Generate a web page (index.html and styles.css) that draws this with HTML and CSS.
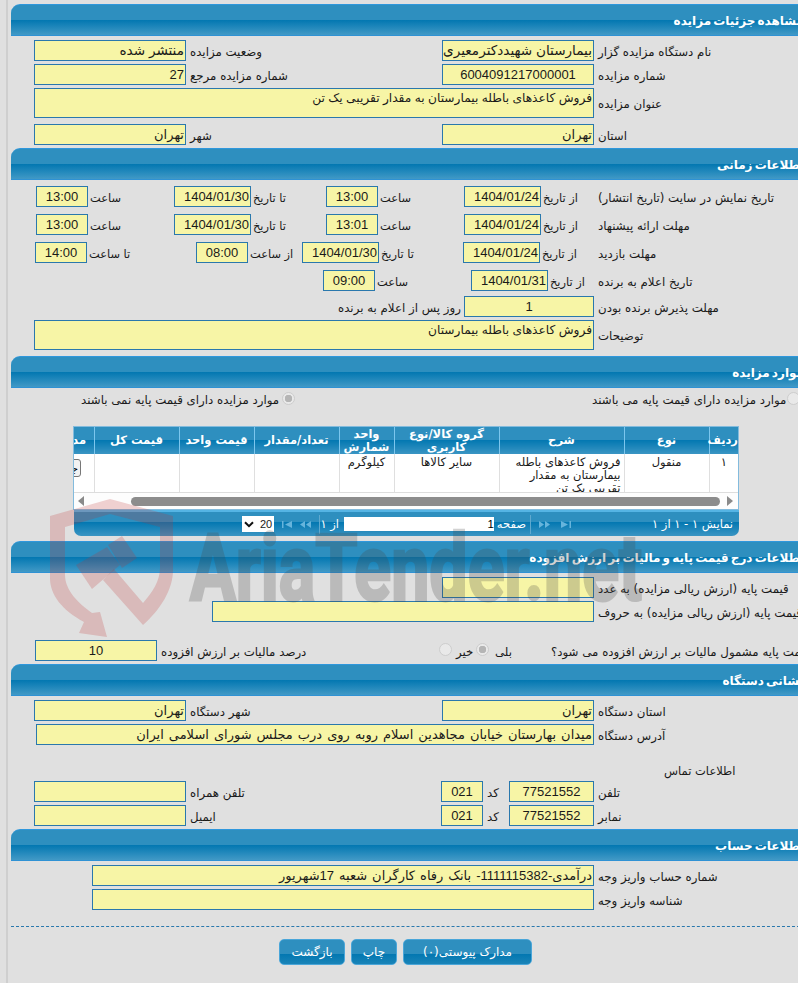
FILE: index.html
```html
<!DOCTYPE html>
<html lang="fa">
<head>
<meta charset="utf-8">
<title>مشاهده جزئیات مزایده</title>
<link rel="stylesheet" href="styles.css">
</head>
<body>
<div class="page">

<section class="panel">
  <h2 class="head">مشاهده جزئیات مزایده</h2>
  <div class="row r-pair">
    <label>نام دستگاه مزایده گزار</label><div class="val wide">بیمارستان شهیددکترمعیری</div>
    <label>وضعیت مزایده</label><div class="val wide">منتشر شده</div>
  </div>
  <div class="row r-pair">
    <label>شماره مزایده</label><div class="val center">6004091217000001</div>
    <label>شماره مزایده مرجع</label><div class="val">27</div>
  </div>
  <div class="row tall r-wide">
    <label class="mid">عنوان مزایده</label><div class="val narrow">فروش کاعذهای باطله بیمارستان به مقدار تقریبی یک تن</div>
  </div>
  <div class="row r-pair mt6">
    <label>استان</label><div class="val">تهران</div>
    <label>شهر</label><div class="val">تهران</div>
  </div>
</section>

<section class="panel">
  <h2 class="head">اطلاعات زمانی</h2>
  <div class="row r-t1 mt6">
    <label>تاریخ نمایش در سایت (تاریخ انتشار)</label>
    <label>از تاریخ</label><div class="val">1404/01/24</div>
    <label>ساعت</label><div class="val center">13:00</div>
    <label>تا تاریخ</label><div class="val">1404/01/30</div>
    <label>ساعت</label><div class="val center">13:00</div>
  </div>
  <div class="row r-t1 mt8">
    <label>مهلت ارائه پیشنهاد</label>
    <label>از تاریخ</label><div class="val">1404/01/24</div>
    <label>ساعت</label><div class="val center">13:01</div>
    <label>تا تاریخ</label><div class="val">1404/01/30</div>
    <label>ساعت</label><div class="val center">13:00</div>
  </div>
  <div class="row r-t3 mt8">
    <label>مهلت بازدید</label>
    <label>از تاریخ</label><div class="val">1404/01/24</div>
    <label>تا تاریخ</label><div class="val">1404/01/30</div>
    <label>از ساعت</label><div class="val center">08:00</div>
    <label>تا ساعت</label><div class="val center">14:00</div>
  </div>
  <div class="row r-t4 mt8">
    <label>تاریخ اعلام به برنده</label>
    <label>از تاریخ</label><div class="val">1404/01/31</div>
    <label>ساعت</label><div class="val center">09:00</div>
  </div>
  <div class="row r-t5 mt6">
    <label>مهلت پذیرش برنده بودن</label><div class="val center">1</div>
    <label>روز پس از اعلام به برنده</label>
  </div>
  <div class="row tall r-wide">
    <label class="mid">توضیحات</label><div class="val narrow">فروش کاعذهای باطله بیمارستان</div>
  </div>
</section>

<section class="panel sec3">
  <h2 class="head">موارد مزایده</h2>
  <div class="radios">
    <span class="radio-item first"><input type="radio" name="base" disabled><span>موارد مزایده دارای قیمت پایه می باشند</span></span>
    <span class="radio-item second"><input type="radio" name="base" checked disabled><span>موارد مزایده دارای قیمت پایه نمی باشند</span></span>
  </div>
  <div class="grid-box">
    <div class="grid-clip">
      <table>
        <colgroup>
          <col class="c29"><col class="c85"><col class="c125"><col class="c105"><col class="c55"><col class="c85"><col class="c75"><col class="c85"><col class="c52">
        </colgroup>
        <thead>
          <tr><th>ردیف</th><th>نوع</th><th>شرح</th><th>گروه کالا/نوع کاربری</th><th>واحد شمارش</th><th>تعداد/مقدار</th><th>قیمت واحد</th><th>قیمت کل</th><th>مدارک</th></tr>
        </thead>
        <tbody>
          <tr><td>۱</td><td>منقول</td><td class="desc">فروش کاعذهای باطله بیمارستان به مقدار تقریبی یک تن</td><td>سایر کالاها</td><td>کیلوگرم</td><td></td><td></td><td></td><td><button class="mini" type="button">جزئیات</button></td></tr>
        </tbody>
      </table>
    </div>
    <div class="hscroll">
      <svg class="arr" width="6" height="10" viewBox="0 0 6 10"><path d="M6 0V10L0 5Z"/></svg>
      <div class="thumb"></div>
      <svg class="arr" width="6" height="10" viewBox="0 0 6 10"><path d="M0 0V10L6 5Z"/></svg>
    </div>
  </div>
  <div class="pager">
    <div class="sel"><svg width="10" height="7" viewBox="0 0 10 7"><path d="M1 1.2L5 5.2L9 1.2" fill="none" stroke="#111" stroke-width="2"/></svg><span>20</span></div>
    <svg class="pg g1" width="10" height="7" viewBox="0 0 10 7"><path d="M0 0H1.5V7H0ZM3 3.5L10 0V7Z"/></svg>
    <svg class="pg g2" width="11" height="7" viewBox="0 0 11 7"><path d="M0 3.5L5 0V7ZM6 3.5L11 0V7Z"/></svg>
    <span class="sep"></span>
    <span class="pt of">از ۱</span>
    <input class="pinput" type="text" value="1">
    <span class="pt pg-word">صفحه</span>
    <span class="sep"></span>
    <svg class="pg g3" width="11" height="7" viewBox="0 0 11 7"><path d="M0 0L5 3.5L0 7ZM6 0L11 3.5L6 7Z"/></svg>
    <svg class="pg g4" width="10" height="7" viewBox="0 0 10 7"><path d="M0 0L7 3.5L0 7ZM8.5 0H10V7H8.5Z"/></svg>
    <span class="pt total">نمایش ۱ - ۱ از ۱</span>
  </div>
</section>

<section class="panel sec4">
  <h2 class="head">اطلاعات درج قیمت پایه و مالیات بر ارزش افزوده</h2>
  <div class="row r-num">
    <label>قیمت پایه (ارزش ریالی مزایده) به عدد</label><div class="val"></div>
  </div>
  <div class="row r-words">
    <label>قیمت پایه (ارزش ریالی مزایده) به حروف</label><div class="val"></div>
  </div>
  <div class="row r-tax">
    <label>قیمت پایه مشمول مالیات بر ارزش افزوده می شود؟</label>
    <label class="yes">بلی</label><input type="radio" name="tax" checked disabled>
    <label class="no">خیر</label><input type="radio" name="tax" disabled>
    <label>درصد مالیات بر ارزش افزوده</label><div class="val center">10</div>
  </div>
</section>

<section class="panel">
  <h2 class="head">نشانی دستگاه</h2>
  <div class="row r-pair">
    <label>استان دستگاه</label><div class="val">تهران</div>
    <label>شهر دستگاه</label><div class="val">تهران</div>
  </div>
  <div class="row r-addr">
    <label>آدرس دستگاه</label><div class="val spaced">میدان بهارستان خیابان مجاهدین اسلام روبه روی درب مجلس شورای اسلامی ایران</div>
  </div>
  <div class="contact">اطلاعات تماس</div>
  <div class="row r-tel">
    <label>تلفن</label><div class="val center">77521552</div>
    <label>کد</label><div class="val center">021</div>
    <label>تلفن همراه</label><div class="val"></div>
  </div>
  <div class="row r-tel">
    <label>نمابر</label><div class="val center">77521552</div>
    <label>کد</label><div class="val center">021</div>
    <label>ایمیل</label><div class="val"></div>
  </div>
</section>

<section class="panel">
  <h2 class="head">اطلاعات حساب</h2>
  <div class="row r-acct">
    <label>شماره حساب واریز وجه</label><div class="val spaced">درآمدی-1111115382- بانک رفاه کارگران شعبه 17شهریور</div>
  </div>
  <div class="row r-acct">
    <label>شناسه واریز وجه</label><div class="val"></div>
  </div>
</section>

<div class="dash"></div>
<div class="actions">
  <button class="btn b-docs" type="button">مدارک پیوستی(۰)</button>
  <button class="btn b-print" type="button">چاپ</button>
  <button class="btn b-back" type="button">بازگشت</button>
</div>
</div>

<svg class="watermark" width="798" height="983" viewBox="0 0 798 983" aria-hidden="true">
  <g class="wm-red">
    <path d="M50 516L110 499L173 516V570C173 590 160 610 143 625L103 580L114 569L143 603C153 592 160 580 160 568V527L110 514L65 527V575C65 590 78 603 92 613L100 612L107 637L79 633L84 622C62 610 50 595 50 578Z"/>
    <path d="M76 565L107 547L120 565L92 589Z"/>
    <path d="M108 545L122 536L137 558L122 568Z"/>
  </g>
  <text class="wm-text" x="190" y="600" textLength="452" lengthAdjust="spacingAndGlyphs">AriaTender.net</text>
</svg>
</body>
</html>
```
FILE: styles.css
```css
html, body { margin: 0; padding: 0; height: 983px; overflow: hidden; background: #e0e0e0; }
body { width: 798px; position: relative; font: 13px "Liberation Sans", "DejaVu Sans", sans-serif; color: #1a1a1a; }
.page { margin-left: 6px; border-left: 2px solid #cfcfcf; padding: 4px 0 0 3px; width: 800px; height: 979px; }

.panel { width: 800px; direction: rtl; margin-top: 4px; }
.panel:first-child { margin-top: 0; }
.panel.sec3 { margin-top: 6px; }
.panel.sec4 { margin-top: 5px; }

.head {
  box-sizing: border-box; height: 32px; margin: 0; padding: 7px 7px 0 0;
  border-top: 1px solid #2f97dc; border-bottom: 1px solid #2f92d4; border-top-left-radius: 9px;
  background: linear-gradient(#2e8fbf 0, #2e8fbf 15px, #0277b1 15px, #4199c6 100%);
  color: #fff; font: bold 12px/18px "DejaVu Sans", sans-serif; word-spacing: -2px; text-align: right;
}

.row { display: grid; height: 20px; margin-top: 4px; align-items: stretch; }
.row.tall { height: 30px; }
.row.mt6 { margin-top: 6px; }
.row.mt8 { margin-top: 8px; }
.row label { padding: 3px 0 0 4px; text-align: left; line-height: 18px; white-space: nowrap; font-size: 11.8px; font-family: "DejaVu Sans", sans-serif; }
.row label.mid { padding-top: 7px; }
.r-t1 label:not(:first-child), .r-t3 label:not(:first-child), .r-t4 label:not(:first-child) { padding-left: 2px; font-size: 11.4px; }

.val {
  box-sizing: border-box; border: 1px solid #2a78ad; background: #f7f5a6; padding: 0 1px;
  font: 13px/20px "Liberation Sans", "DejaVu Sans", sans-serif; color: #1a1a1a; white-space: nowrap; overflow: hidden; text-align: right;
}
.val.center { text-align: center; }
.val.wide { font-size: 13.6px; }
.val.narrow { font-size: 12.2px; line-height: 18px; }
.val.spaced { word-spacing: 1.4px; }

.r-pair { grid-template-columns: 217px 152px 256px 152px; }
.r-wide { grid-template-columns: 217px 560px; }
.r-t1 { grid-template-columns: 217px 53px 77px 86px 52px 75px 77px 86px 52px; }
.r-t3 { grid-template-columns: 217px 54px 77px 84px 77px 54px 52px 109px 52px; }
.r-t4 { grid-template-columns: 217px 46px 77px 96px 52px; }
.r-t5 { grid-template-columns: 217px 130px 130px; }
.r-num { grid-template-columns: 217px 152px; }
.r-words { grid-template-columns: 217px 382px; }
.row.r-tax { grid-template-columns: 264px 58px 12px 25px 13px 282px 122px; margin-top: 19px; }
.r-addr { grid-template-columns: 217px 558px; }
.r-tel { grid-template-columns: 217px 85px 26px 42px 255px 152px; }
.r-acct { grid-template-columns: 217px 502px; }

.row label.yes { padding-left: 6px; }

input[type=radio] {
  appearance: none; -webkit-appearance: none; box-sizing: border-box; width: 13px; height: 13px; margin: 0;
  border: 1px solid #cdcdcd; border-radius: 50%; background: #e9e9e9;
}
input[type=radio]:checked { background: radial-gradient(circle, #b5b5b5 0 3.5px, #e9e9e9 4px); }
.r-tax input[type=radio] { margin-top: 3px; }

.radios { position: relative; height: 38px; }
.radio-item { position: absolute; top: 4px; display: flex; align-items: flex-start; gap: 1px; font: 11.8px/18px "DejaVu Sans", sans-serif; white-space: nowrap; }
.radio-item span { margin-top: -1px; }
.radio-item.first { left: 581px; }
.radio-item.second { left: 70px; gap: 3px; }

.grid-box { box-sizing: border-box; width: 666px; margin-right: 72px; height: 84px; border: 1px solid #83bbdd; background: #fff; overflow: hidden; }
.grid-clip { height: 65px; overflow: hidden; direction: rtl; border-bottom: 1px solid #ddd; box-sizing: content-box; }
table { table-layout: fixed; width: 696px; border-collapse: collapse; font: 11.5px/13px "DejaVu Sans", sans-serif; }
.c29 { width: 29px; } .c85 { width: 85px; } .c125 { width: 125px; } .c105 { width: 105px; }
.c55 { width: 55px; } .c75 { width: 75px; } .c52 { width: 52px; }
th {
  box-sizing: border-box; height: 27px; padding: 0; color: #fff; font-weight: bold; line-height: 13px; text-align: center;
  border-left: 1px solid #7cc6ee; background: linear-gradient(#2e8fbf 0, #2e8fbf 13px, #0277b1 13px, #3a95c3 100%);
}
td { height: 38px; padding: 2px 2px 0; vertical-align: top; text-align: center; border-left: 1px solid #dfdfdf; }
td.desc { text-align: right; padding: 2px 3px 0 6px; }
.mini { width: 26px; height: 18px; padding: 0 2px; margin-top: 3px; border: 1px solid #777; border-radius: 3px; background: #f2f2f2; font: 11px "DejaVu Sans", sans-serif; overflow: hidden; white-space: nowrap; }

.hscroll { direction: ltr; display: flex; align-items: center; height: 16px; background: #fdfdfd; padding-left: 4px; }
.arr { fill: #8a8a8a; flex: none; }
.thumb { width: 589px; height: 9px; margin: 0 7px 0 47px; border-radius: 5px; background: #8c8c8c; }

.pager {
  box-sizing: border-box; direction: ltr; display: flex; align-items: center; width: 665px; height: 26px; margin-right: 72px; padding: 0 6px 0 168px;
  border-top: 2px solid #55b4e4; border-bottom-left-radius: 7px; border-bottom-right-radius: 7px;
  background: linear-gradient(#2e8fbf 0, #2e8fbf 10px, #0277b1 10px, #3a95c3 100%);
}
.sel { box-sizing: border-box; direction: ltr; display: flex; align-items: center; gap: 6px; width: 32px; height: 16px; padding-left: 2px; background: #fff; font: 11px "Liberation Sans", sans-serif; flex: none; }
.pg { fill: #66b4dc; flex: none; }
.g1 { margin-left: 8px; } .g2 { margin-left: 8px; } .sep { flex: none; width: 1px; height: 19px; background: #5fa9cf; margin-left: 8px; }
.pt { color: #fff; font: 11.5px/16px "DejaVu Sans", sans-serif; white-space: nowrap; direction: rtl; flex: none; }
.of { margin-left: 4px; width: 15px; }
.pinput { box-sizing: border-box; direction: rtl; width: 150px; height: 14px; margin: 0 0 0 5px; padding: 0; border: 0; background: #fff; font: 11.5px "Liberation Sans", sans-serif; flex: none; }
.pg-word { margin-left: 4px; width: 28px; }
.pg-word + .sep { margin-left: 4px; }
.g3 { margin-left: 8px; } .g4 { margin-left: 11px; }
.total { margin-left: auto; }

.contact { height: 20px; margin: 17px 0 0 653px; text-align: left; font: 11.5px/20px "DejaVu Sans", sans-serif; white-space: nowrap; }
.contact + .row { margin-top: 0; }

.dash { width: 789px; margin-top: 17px; border-top: 1px dashed #2a78ad; }
.actions { direction: rtl; display: flex; gap: 6px; width: 800px; padding: 12px 279px 0 0; box-sizing: border-box; }
.btn {
  box-sizing: border-box; height: 26px; padding: 0; border: 1px solid #4aa6d9; border-radius: 5px; color: #fff;
  background: linear-gradient(#2e8fbf 0, #2e8fbf 14px, #0277b1 14px, #1a84b8 100%);
  font: 12px/18px "DejaVu Sans", sans-serif; text-align: center;
}
.b-docs { width: 129px; } .b-print { width: 46px; } .b-back { width: 66px; }

.watermark { position: absolute; left: 0; top: 0; pointer-events: none; }
.wm-red { fill: rgba(190, 50, 50, .22); }
.wm-text { fill: #464646; stroke: #464646; stroke-width: 3px; opacity: .24; font: bold 92px Roboto, "Liberation Sans", sans-serif; }
```
